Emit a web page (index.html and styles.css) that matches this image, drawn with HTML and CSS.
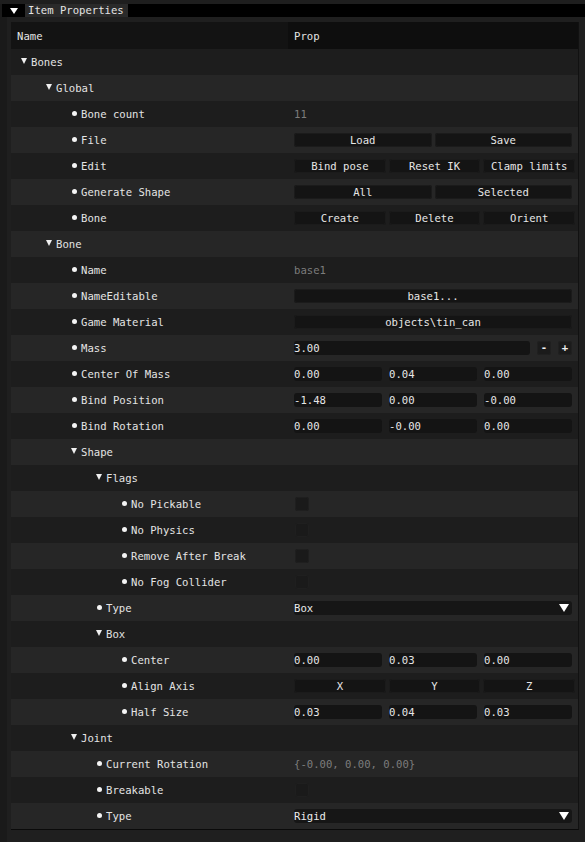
FILE: index.html
```html
<!DOCTYPE html>
<html>
<head>
<meta charset="utf-8">
<link rel="stylesheet" href="styles.css">
</head>
<body>
<div class="window">
  <div class="titlebar">
    <div class="collapse"><span class="tri"></span></div>
    <div class="tab">Item Properties</div>
    <div class="titlefill"></div>
  </div>
  <div class="content">
    <div class="table">
      <div class="row head"><div class="name hname">Name</div><div class="prop hprop">Prop</div></div>

      <div class="row"><div class="name l0"><span class="mk"><span class="arrow"></span></span>Bones</div><div class="prop"></div></div>
      <div class="row"><div class="name l1"><span class="mk"><span class="arrow"></span></span>Global</div><div class="prop"></div></div>
      <div class="row"><div class="name l2"><span class="mk"><span class="dot"></span></span>Bone count</div><div class="prop"><span class="muted">11</span></div></div>
      <div class="row"><div class="name l2"><span class="mk"><span class="dot"></span></span>File</div><div class="prop"><div class="btns"><div class="btn">Load</div><div class="btn">Save</div></div></div></div>
      <div class="row"><div class="name l2"><span class="mk"><span class="dot"></span></span>Edit</div><div class="prop"><div class="btns three"><div class="btn">Bind pose</div><div class="btn">Reset IK</div><div class="btn">Clamp limits</div></div></div></div>
      <div class="row"><div class="name l2"><span class="mk"><span class="dot"></span></span>Generate Shape</div><div class="prop"><div class="btns"><div class="btn">All</div><div class="btn">Selected</div></div></div></div>
      <div class="row"><div class="name l2"><span class="mk"><span class="dot"></span></span>Bone</div><div class="prop"><div class="btns three"><div class="btn">Create</div><div class="btn">Delete</div><div class="btn">Orient</div></div></div></div>

      <div class="row"><div class="name l1"><span class="mk"><span class="arrow"></span></span>Bone</div><div class="prop"></div></div>
      <div class="row"><div class="name l2"><span class="mk"><span class="dot"></span></span>Name</div><div class="prop"><span class="muted">base1</span></div></div>
      <div class="row"><div class="name l2"><span class="mk"><span class="dot"></span></span>NameEditable</div><div class="prop"><div class="btns"><div class="btn">base1...</div></div></div></div>
      <div class="row"><div class="name l2"><span class="mk"><span class="dot"></span></span>Game Material</div><div class="prop"><div class="btns"><div class="btn">objects\tin_can</div></div></div></div>
      <div class="row"><div class="name l2"><span class="mk"><span class="dot"></span></span>Mass</div><div class="prop"><div class="fields"><div class="field">3.00</div><div class="step">-</div><div class="step">+</div></div></div></div>
      <div class="row"><div class="name l2"><span class="mk"><span class="dot"></span></span>Center Of Mass</div><div class="prop"><div class="fields"><div class="field">0.00</div><div class="field">0.04</div><div class="field">0.00</div></div></div></div>
      <div class="row"><div class="name l2"><span class="mk"><span class="dot"></span></span>Bind Position</div><div class="prop"><div class="fields"><div class="field">-1.48</div><div class="field">0.00</div><div class="field">-0.00</div></div></div></div>
      <div class="row"><div class="name l2"><span class="mk"><span class="dot"></span></span>Bind Rotation</div><div class="prop"><div class="fields"><div class="field">0.00</div><div class="field">-0.00</div><div class="field">0.00</div></div></div></div>

      <div class="row"><div class="name l2"><span class="mk"><span class="arrow"></span></span>Shape</div><div class="prop"></div></div>
      <div class="row"><div class="name l3"><span class="mk"><span class="arrow"></span></span>Flags</div><div class="prop"></div></div>
      <div class="row"><div class="name l4"><span class="mk"><span class="dot"></span></span>No Pickable</div><div class="prop"><span class="check"></span></div></div>
      <div class="row"><div class="name l4"><span class="mk"><span class="dot"></span></span>No Physics</div><div class="prop"><span class="check"></span></div></div>
      <div class="row"><div class="name l4"><span class="mk"><span class="dot"></span></span>Remove After Break</div><div class="prop"><span class="check"></span></div></div>
      <div class="row"><div class="name l4"><span class="mk"><span class="dot"></span></span>No Fog Collider</div><div class="prop"><span class="check"></span></div></div>
      <div class="row"><div class="name l3"><span class="mk"><span class="dot"></span></span>Type</div><div class="prop"><div class="combo"><span>Box</span><span class="ctri"></span></div></div></div>
      <div class="row"><div class="name l3"><span class="mk"><span class="arrow"></span></span>Box</div><div class="prop"></div></div>
      <div class="row"><div class="name l4"><span class="mk"><span class="dot"></span></span>Center</div><div class="prop"><div class="fields"><div class="field">0.00</div><div class="field">0.03</div><div class="field">0.00</div></div></div></div>
      <div class="row"><div class="name l4"><span class="mk"><span class="dot"></span></span>Align Axis</div><div class="prop"><div class="btns three"><div class="btn">X</div><div class="btn">Y</div><div class="btn">Z</div></div></div></div>
      <div class="row"><div class="name l4"><span class="mk"><span class="dot"></span></span>Half Size</div><div class="prop"><div class="fields"><div class="field">0.03</div><div class="field">0.04</div><div class="field">0.03</div></div></div></div>

      <div class="row"><div class="name l2"><span class="mk"><span class="arrow"></span></span>Joint</div><div class="prop"></div></div>
      <div class="row"><div class="name l3"><span class="mk"><span class="dot"></span></span>Current Rotation</div><div class="prop"><span class="muted">{-0.00, 0.00, 0.00}</span></div></div>
      <div class="row"><div class="name l3"><span class="mk"><span class="dot"></span></span>Breakable</div><div class="prop"><span class="check"></span></div></div>
      <div class="row"><div class="name l3"><span class="mk"><span class="dot"></span></span>Type</div><div class="prop"><div class="combo"><span>Rigid</span><span class="ctri"></span></div></div></div>
    </div>
  </div>
</div>
</body>
</html>
```

FILE: styles.css
```css
* { box-sizing: border-box; }
html, body {
  margin: 0;
  padding: 0;
  background: #1e1e1e;
  width: 585px;
  height: 842px;
  overflow: hidden;
}
body {
  font-family: "DejaVu Sans Mono", "Liberation Mono", monospace;
  font-size: 10.6px;
  color: #e4e4e4;
}
.window {
  height: 842px;
  background: #1f1f1f;
  border-left: 7px solid #1a1a1a;
  position: relative;
}
.titlebar {
  display: flex;
  height: 13px;
  margin-top: 4px;
  margin-left: -5px;
  background: #000;
}
.collapse {
  width: 23px;
  height: 13px;
  background: #000;
  display: flex;
  align-items: center;
  justify-content: center;
}
.tri {
  width: 0;
  height: 0;
  border-left: 4px solid transparent;
  border-right: 4px solid transparent;
  border-top: 6px solid #fff;
}
.tab {
  background: #2a2a2a;
  color: #e4e4e4;
  padding: 0 4px 0 3px;
  line-height: 13px;
  height: 13px;
}
.titlefill { flex: 1; background: #000; }

.content {
  padding: 5px 0 0 4px;
}
.table {
  width: 568px;
  border-right: 1px solid #111;
  border-bottom: 1px solid #0a0a0a;
}
.row {
  display: flex;
  height: 26px;
  align-items: stretch;
  background: #1d1d1d;
}
.row:nth-child(odd) { background: #262626; }
.row.head { height: 27px; background: #0e0e0e; }
.name {
  width: 277px;
  display: flex;
  align-items: center;
  white-space: pre;
}
.prop {
  flex: 1;
  display: flex;
  align-items: center;
  padding: 0 6px 0 6px;
  white-space: pre;
}
.hname { background: #131313; padding-left: 6px; }
.hprop { background: #0e0e0e; padding-left: 6px; }
.l0 { padding-left: 10px; }
.l1 { padding-left: 35px; }
.l2 { padding-left: 60px; }
.l3 { padding-left: 85px; }
.l4 { padding-left: 110px; }
.mk {
  width: 10px;
  height: 26px;
  position: relative;
  flex: none;
}
.arrow {
  position: absolute;
  left: 0;
  top: 9px;
  width: 0;
  height: 0;
  border-left: 3px solid transparent;
  border-right: 3px solid transparent;
  border-top: 6px solid #f0f0f0;
}
.dot {
  position: absolute;
  left: 1px;
  top: 10px;
  width: 5px;
  height: 5px;
  border-radius: 50%;
  background: #f4f4f4;
}
.muted { color: #7c7c7c; }
.btns {
  flex: 1;
  display: flex;
  gap: 3px;
}
.btns.three { margin-right: -3px; }
.btn {
  flex: 1;
  height: 14px;
  line-height: 14px;
  text-align: center;
  background: #141414;
  border-radius: 3px;
  box-shadow: inset 0 0 0 1px #1b1b1b;
  color: #e6e6e6;
}
.fields {
  flex: 1;
  display: flex;
  gap: 7px;
}
.field {
  flex: 1;
  height: 14px;
  line-height: 14px;
  background: #141414;
  border-radius: 3px;
  color: #e6e6e6;
}
.step {
  width: 14px;
  height: 14px;
  line-height: 13px;
  text-align: center;
  background: #1b1b1b;
  border-radius: 3px;
  box-shadow: inset 0 0 0 1px #202020;
  color: #f0f0f0;
  font-weight: bold;
  flex: none;
}
.check {
  width: 14px;
  height: 14px;
  margin-left: 1px;
  border-radius: 3px;
  background: #1a1a1a;
  box-shadow: inset 0 0 0 1px #1f1f1f;
}
.combo {
  flex: 1;
  height: 14px;
  line-height: 14px;
  background: #161616;
  border-radius: 3px;
  display: flex;
  justify-content: space-between;
  align-items: center;
  color: #ececec;
}
.ctri {
  width: 0;
  height: 0;
  margin-right: 3px;
  border-left: 5px solid transparent;
  border-right: 5px solid transparent;
  border-top: 8px solid #fff;
}
```
